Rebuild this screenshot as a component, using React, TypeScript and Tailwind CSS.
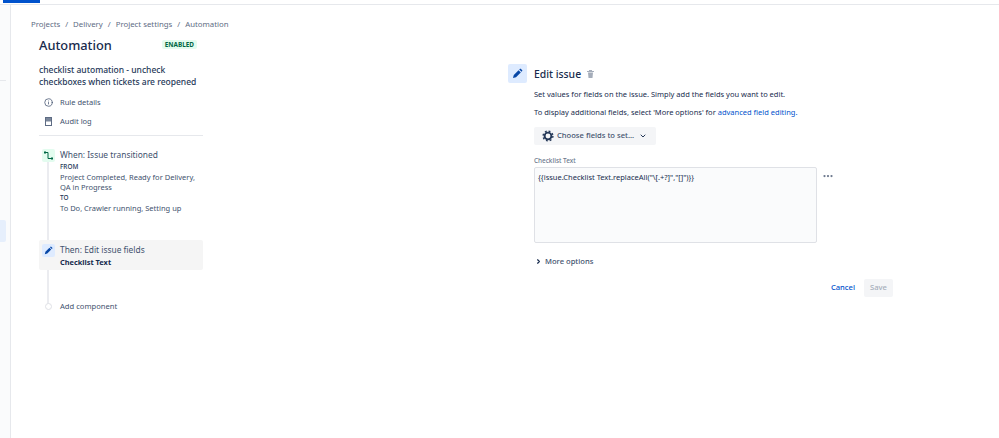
import { ChevronDown, ChevronRight, Ellipsis, Info } from "lucide-react";

const font = { fontFamily: '"Noto Sans", "Open Sans", sans-serif' };

const PencilIcon = ({ size }: { size: number }) => {
  return (
    <svg width={size} height={size} viewBox="0 0 16 16" fill="#0747a6">
      <path d="M1.5 14.5 L2.6 10.2 L9.6 3.2 L12.8 6.4 L5.8 13.4 Z" />
      <path d="M10.6 2.2 L11.6 1.2 Q12.2 0.7 12.8 1.2 L14.8 3.2 Q15.3 3.8 14.8 4.4 L13.8 5.4 Z" />
    </svg>
  );
};

const GearIcon = () => {
  return (
    <svg width="12" height="12" viewBox="0 0 12 12" fill="none" stroke="#253858">
      <circle cx="6" cy="6" r="3.4" strokeWidth="1.9" />
      <circle cx="6" cy="6" r="4.9" strokeWidth="1.4" strokeDasharray="1.9 1.95" />
    </svg>
  );
};

const Sidebar = () => {
  return (
    <aside className="w-[11px] shrink-0 border-r border-[#e6e8ec] bg-[#fafbfc] flex flex-col">
      <div className="mt-[75px] h-px w-[6px] bg-[#e6e8ec]" />
      <div className="mt-[139px] h-[22px] w-[6px] rounded-r-[2px] bg-[#e6effc]" />
    </aside>
  );
};

const Breadcrumbs = () => {
  return (
    <div className="flex gap-[5px] text-[7.8px] leading-[12px] text-[#5e6c84]">
      <span>Projects</span>
      <span>/</span>
      <span>Delivery</span>
      <span>/</span>
      <span>Project settings</span>
      <span>/</span>
      <span>Automation</span>
    </div>
  );
};

const RuleColumn = () => {
  return (
    <div className="w-[164px] ml-[28px] mt-[5px]">
      <div className="flex items-start justify-between">
        <h1 className="text-[12.8px] leading-[20px] font-medium text-[#172b4d]">Automation</h1>
        <span className="mt-[5px] mr-[6px] rounded-[2px] bg-[#e3fcef] px-[3px] text-[6.4px] leading-[9px] font-bold text-[#006644]">
          ENABLED
        </span>
      </div>

      <div className="mt-[9px] text-[8.5px] leading-[12px] font-medium text-[#253858] whitespace-nowrap">
        checklist automation - uncheck
        <br />
        checkboxes when tickets are reopened
      </div>

      <div className="mt-[8px] flex items-center text-[7.5px] leading-[12px] text-[#42526e]">
        <span className="w-[18px] mr-[3px] flex justify-center">
          <Info size={9} strokeWidth={2} />
        </span>
        Rule details
      </div>
      <div className="mt-[7px] flex items-center text-[7.5px] leading-[12px] text-[#42526e]">
        <span className="w-[18px] mr-[3px] flex justify-center">
          <svg width="7" height="9" viewBox="0 0 7 9" fill="none">
            <rect x="0.5" y="0.5" width="6" height="8" stroke="#5e6c84" />
            <rect x="1" y="1" width="5" height="3.5" fill="#7a869a" />
          </svg>
        </span>
        Audit log
      </div>

      <div className="mt-[8px] border-t border-[#e6e8ec]" />

      <div className="relative mt-[13px]">
        <div className="absolute left-[8px] top-[10px] h-[145px] w-[2px] bg-[#ebecf0]" />

        <div className="relative flex h-[91px]">
          <span className="ml-[3px] w-[13px] h-[13px] rounded-[2px] bg-[#e3fcef] flex items-center justify-center">
            <svg width="9" height="9" viewBox="0 0 9 9" fill="none" stroke="#006644" strokeWidth="1">
              <path d="M1 1.5h3v6h4" />
              <rect x="0" y="0.5" width="2" height="2" fill="#006644" stroke="none" />
              <rect x="7" y="6.5" width="2" height="2" fill="#006644" stroke="none" />
            </svg>
          </span>
          <div className="ml-[5px] text-[7.5px] leading-[10.2px] text-[#42526e] whitespace-nowrap">
            <div className="text-[8.4px] leading-[12px] mb-[1px]">When: Issue transitioned</div>
            <div className="text-[6.4px] font-medium text-[#253858]">FROM</div>
            <div>Project Completed, Ready for Delivery,</div>
            <div>QA in Progress</div>
            <div className="text-[6.4px] font-medium text-[#253858]">TO</div>
            <div>To Do, Crawler running, Setting up</div>
          </div>
        </div>

        <div className="relative h-[30px] rounded-[2px] bg-[#f5f5f5] flex">
          <span className="ml-[3px] w-[13px] h-[13px] mt-[4px] rounded-[2px] bg-[#deebff] flex items-center justify-center">
            <PencilIcon size={9} />
          </span>
          <div className="ml-[5px] mt-[4px]">
            <div className="text-[8.4px] leading-[12px] text-[#42526e]">Then: Edit issue fields</div>
            <div className="text-[7.4px] leading-[13px] font-bold text-[#172b4d]">Checklist Text</div>
          </div>
        </div>

        <div className="relative mt-[30px] flex items-center">
          <span className="ml-[6px] w-[7px] h-[7px] rounded-full border border-[#dfe1e6] bg-white" />
          <span className="ml-[8px] text-[7.6px] leading-[12px] text-[#42526e]">Add component</span>
        </div>
      </div>
    </div>
  );
};

const EditPanel = () => {
  return (
    <div className="w-[385px] ml-[305px] mt-[34px]">
      <div className="flex items-center">
        <span className="w-[19px] h-[19px] rounded-[2px] bg-[#deebff] flex items-center justify-center">
          <PencilIcon size={11} />
        </span>
        <span className="ml-[7px] text-[10.4px] leading-[16px] font-medium text-[#172b4d]">Edit issue</span>
        <svg width="7" height="8" viewBox="0 0 7 8" fill="#a5adba" className="ml-[6px]">
          <rect x="0" y="1" width="7" height="1" />
          <rect x="2" y="0" width="3" height="1" />
          <path d="M1 2.5h5l-.5 5.5h-4z" />
        </svg>
      </div>

      <div className="ml-[26px]">
        <p className="mt-[5px] text-[7.5px] leading-[12px] text-[#172b4d]">
          Set values for fields on the issue. Simply add the fields you want to edit.
        </p>
        <p className="mt-[6px] text-[7.5px] leading-[12px] text-[#172b4d]">
          To display additional fields, select 'More options' for{" "}
          <span className="text-[#0052cc]">advanced field editing.</span>
        </p>

        <button className="mt-[9px] h-[18px] w-[122px] rounded-[2px] bg-[#f4f5f7] flex items-center pl-[8px] text-[7.6px] text-[#42526e] font-medium whitespace-nowrap">
          <GearIcon />
          <span className="ml-[3px]">Choose fields to set...</span>
          <ChevronDown size={8} strokeWidth={3} className="ml-[5px] text-[#253858]" />
        </button>

        <div className="mt-[11px] text-[6.4px] leading-[10px] font-medium text-[#6b778c]">Checklist Text</div>
        <div className="mt-[1px] flex items-start">
          <div className="w-[283px] h-[76px] rounded-[2px] border border-[#dfe1e6] bg-[#fafbfc] px-[3px] py-[3px] text-[7.5px] leading-[12px] text-[#172b4d]">
            {'{{issue.Checklist Text.replaceAll("\\[.+?]","[]")}}'}
          </div>
          <Ellipsis size={12} strokeWidth={2.5} className="ml-[5px] mt-[3px] text-[#6b778c]" />
        </div>

        <div className="mt-[12px] flex items-center text-[7.6px] leading-[12px] font-medium text-[#42526e]">
          <ChevronRight size={7} strokeWidth={4} className="ml-[1px] text-[#172b4d]" />
          <span className="ml-[3px]">More options</span>
        </div>

        <div className="mt-[12px] flex items-center justify-end">
          <span className="text-[7.6px] font-medium text-[#0052cc]">Cancel</span>
          <span className="ml-[9px] h-[18px] w-[29px] rounded-[2px] bg-[#f4f5f7] flex items-center justify-center text-[7.6px] font-medium text-[#a5adba]">
            Save
          </span>
        </div>
      </div>
    </div>
  );
};

export default function App() {
  return (
    <div className="w-[999px] h-[438px] bg-white flex flex-col overflow-hidden" style={font}>
      <div className="h-[5px] shrink-0 border-b border-[#e6e8ec]">
        <div className="ml-[3px] h-[3px] w-[37px] bg-[#0052cc]" />
      </div>
      <div className="flex flex-1">
        <Sidebar />
        <main className="flex-1">
          <div className="ml-[20px] mt-[13px]">
            <Breadcrumbs />
          </div>
          <div className="flex">
            <RuleColumn />
            <EditPanel />
          </div>
        </main>
      </div>
    </div>
  );
}
